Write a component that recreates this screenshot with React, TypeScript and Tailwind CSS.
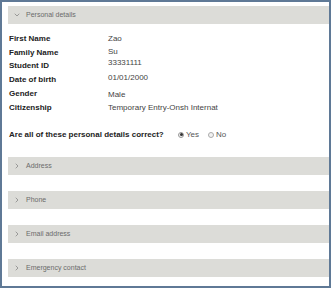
import { ChevronDown, ChevronRight } from 'lucide-react'

const details = [
  { label: 'First Name', value: 'Zao', shift: '' },
  { label: 'Family Name', value: 'Su', shift: '-translate-y-[1px]' },
  { label: 'Student ID', value: '33331111', shift: '-translate-y-[3px]' },
  { label: 'Date of birth', value: '01/01/2000', shift: '-translate-y-[2px]' },
  { label: 'Gender', value: 'Male', shift: 'translate-y-[1px]' },
  { label: 'Citizenship', value: 'Temporary Entry-Onsh Internat', shift: '' },
]

const sections = ['Address', 'Phone', 'Email address', 'Emergency contact']

function SectionBar({ title, open }: { title: string; open?: boolean }) {
  return (
    <div className="h-[18px] bg-[#dcdcd8] flex items-center pl-[5px] gap-[5px] text-[7px] text-[#6b6b6b]">
      {open ? (
        <ChevronDown className="w-[8px] h-[8px] text-[#777]" strokeWidth={2} />
      ) : (
        <ChevronRight className="w-[8px] h-[8px] text-[#777]" strokeWidth={2} />
      )}
      <span>{title}</span>
    </div>
  )
}

export default function App() {
  return (
    <div
      className="w-[331px] h-[288px] border-2 border-[#5f7996] bg-white pt-[4px] pl-[6px] overflow-hidden"
      style={{ fontFamily: '"Liberation Sans", Arial, sans-serif' }}
    >
      <SectionBar title="Personal details" open />

      <div className="pt-[8px] pl-[1px]">
        {details.map((d) => (
          <div key={d.label} className="flex h-[13.8px] items-center text-[8px]">
            <span className="w-[99px] font-bold text-[#222]">{d.label}</span>
            <span className={`text-[#444] ${d.shift}`}>{d.value}</span>
          </div>
        ))}
      </div>

      <div className="flex items-center pl-[1px] mt-[13px] h-[14px] text-[8px]">
        <span className="font-bold text-[#222] w-[169px]">Are all of these personal details correct?</span>
        <span className="flex items-center gap-[2px] text-[#555]">
          <span className="w-[6px] h-[6px] rounded-full border border-[#999] bg-[#eee] flex items-center justify-center">
            <span className="w-[3px] h-[3px] rounded-full bg-[#333]" />
          </span>
          Yes
        </span>
        <span className="flex items-center gap-[2px] text-[#555] ml-[9px]">
          <span className="w-[6px] h-[6px] rounded-full border border-[#aaa] bg-[#f2f2f2]" />
          No
        </span>
      </div>

      <div className="mt-[15px] flex flex-col gap-[16px]">
        {sections.map((s) => (
          <SectionBar key={s} title={s} />
        ))}
      </div>
    </div>
  )
}
